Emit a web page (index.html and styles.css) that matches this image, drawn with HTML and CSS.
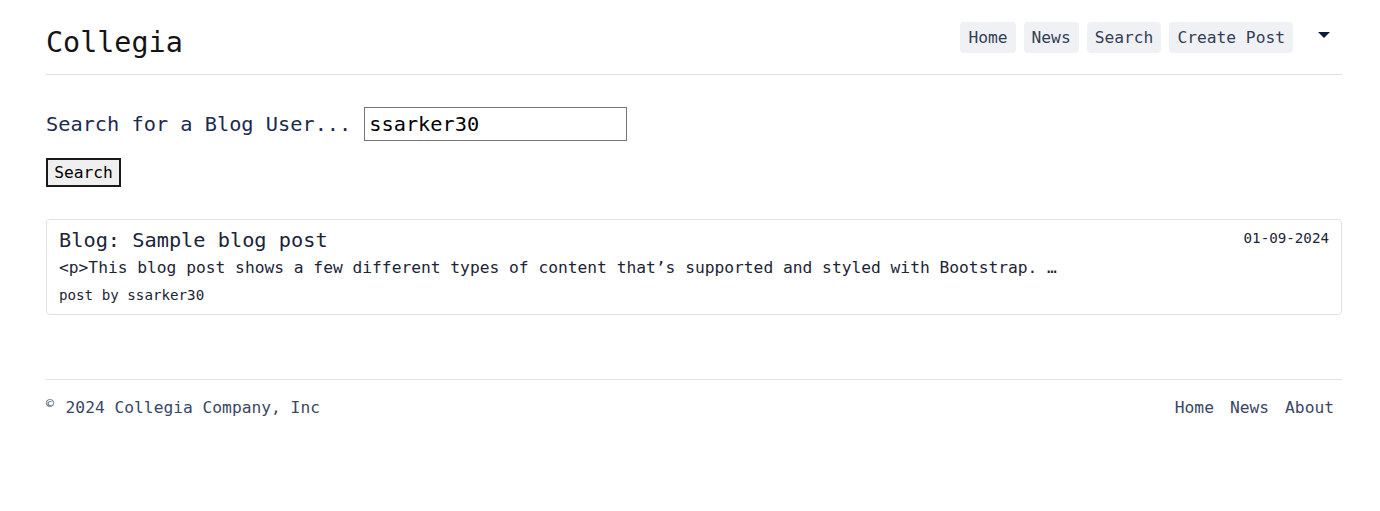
FILE: index.html
```html
<!DOCTYPE html>
<html lang="en">
<head>
<meta charset="utf-8">
<title>Collegia</title>
<link rel="stylesheet" href="styles.css">
</head>
<body>
<div class="page">
  <header class="site-header">
    <div class="brand">Collegia</div>
    <nav class="top-nav">
      <a class="nav-btn" href="#">Home</a>
      <a class="nav-btn" href="#">News</a>
      <a class="nav-btn" href="#">Search</a>
      <a class="nav-btn" href="#">Create Post</a>
      <button class="dropdown-toggle" type="button" aria-label="More"><span class="caret"></span></button>
    </nav>
  </header>

  <main class="content">
    <form class="search-form">
      <div class="search-row">
        <label class="search-label" for="q">Search for a Blog User...</label>
        <input class="search-input" id="q" type="text" value="ssarker30">
      </div>
      <button class="search-btn" type="button">Search</button>
    </form>

    <article class="post-card">
      <div class="post-head">
        <h2 class="post-title">Blog: Sample blog post</h2>
        <span class="post-date">01-09-2024</span>
      </div>
      <p class="post-excerpt">&lt;p&gt;This blog post shows a few different types of content that’s supported and styled with Bootstrap. …</p>
      <p class="post-author">post by ssarker30</p>
    </article>
  </main>

  <footer class="site-footer">
    <p class="copyright"><span class="copy-sign">©</span> 2024 Collegia Company, Inc</p>
    <nav class="footer-nav">
      <a class="footer-link" href="#">Home</a>
      <a class="footer-link" href="#">News</a>
      <a class="footer-link" href="#">About</a>
    </nav>
  </footer>
</div>
</body>
</html>
```

FILE: styles.css
```css
* { box-sizing: border-box; }

html, body {
  margin: 0;
  padding: 0;
  background: #ffffff;
}

body {
  font-family: "DejaVu Sans Mono", "Liberation Mono", monospace;
  font-size: 16.25px;
  line-height: 24px;
  color: #1f2d4d;
}

a { text-decoration: none; }

.page {
  width: 1296px;
  margin-left: 46px;
}

/* Header */
.site-header {
  display: flex;
  justify-content: space-between;
  align-items: flex-start;
  padding-top: 22px;
  height: 75px;
  border-bottom: 1px solid #dee2e6;
}

.brand {
  margin-top: 4px;
  font-size: 28.4px;
  line-height: 34px;
  color: #141414;
}

.top-nav {
  display: flex;
  align-items: flex-start;
  gap: 8px;
  margin-right: 12px;
}

.nav-btn {
  display: block;
  height: 31px;
  padding: 4px 8px 3px;
  border-radius: 4px;
  background: #f0f1f4;
  color: #333e56;
  font-size: 16.25px;
  line-height: 24px;
}

.dropdown-toggle {
  margin-left: 17px;
  width: 12px;
  height: 20px;
  padding: 10px 0 0;
  border: 0;
  background: transparent;
  display: flex;
  justify-content: center;
  align-items: flex-start;
}

.caret {
  display: block;
  width: 0;
  height: 0;
  border-top: 6px solid #0f1c3d;
  border-left: 6px solid transparent;
  border-right: 6px solid transparent;
}

/* Content */
.content {
  padding-top: 32px;
}

.search-form {
  margin: 0;
}

.search-row {
  display: flex;
  align-items: center;
  gap: 13px;
}

.search-label {
  font-size: 20.3px;
  line-height: 34px;
  color: #1b2a50;
}

.search-input {
  width: 263px;
  height: 34px;
  margin: 0;
  padding: 0 4px;
  border: 1px solid #767676;
  border-radius: 0;
  font-family: "DejaVu Sans Mono", "Liberation Mono", monospace;
  font-size: 20.3px;
  color: #000000;
  background: #ffffff;
}

.search-btn {
  display: block;
  margin-top: 17px;
  width: 75px;
  height: 29px;
  padding: 0;
  border: 2px solid #1a1a1a;
  border-radius: 0;
  background: #efefef;
  font-family: "DejaVu Sans Mono", "Liberation Mono", monospace;
  font-size: 16.25px;
  line-height: 23px;
  color: #000000;
}

.post-card {
  margin-top: 32px;
  height: 96px;
  padding: 8px 12px 0;
  border: 1px solid #dee2e6;
  border-radius: 4px;
}

.post-head {
  display: flex;
  justify-content: space-between;
  align-items: flex-start;
}

.post-title {
  margin: 0;
  font-size: 20.3px;
  line-height: 24px;
  font-weight: normal;
  color: #1c2438;
}

.post-date {
  font-size: 14.2px;
  line-height: 20px;
  color: #1c2438;
}

.post-excerpt {
  margin: 4px 0 0;
  font-size: 16.25px;
  line-height: 24px;
  color: #1c2438;
}

.post-author {
  margin: 5px 0 0;
  font-size: 14.2px;
  line-height: 21px;
  color: #1c2438;
}

/* Footer */
.site-footer {
  margin-top: 64px;
  border-top: 1px solid #dee2e6;
  padding-top: 16px;
  display: flex;
  justify-content: space-between;
  align-items: flex-start;
}

.copyright {
  margin: 0;
  font-size: 16.25px;
  line-height: 24px;
  color: #3a4664;
}

.copy-sign {
  display: inline-block;
  width: 9.8px;
  font-size: 13px;
  line-height: 0;
  vertical-align: 5px;
}

.footer-nav {
  display: flex;
}

.footer-link {
  display: block;
  padding: 0 8px;
  font-size: 16.25px;
  line-height: 24px;
  color: #3a4664;
}
```
